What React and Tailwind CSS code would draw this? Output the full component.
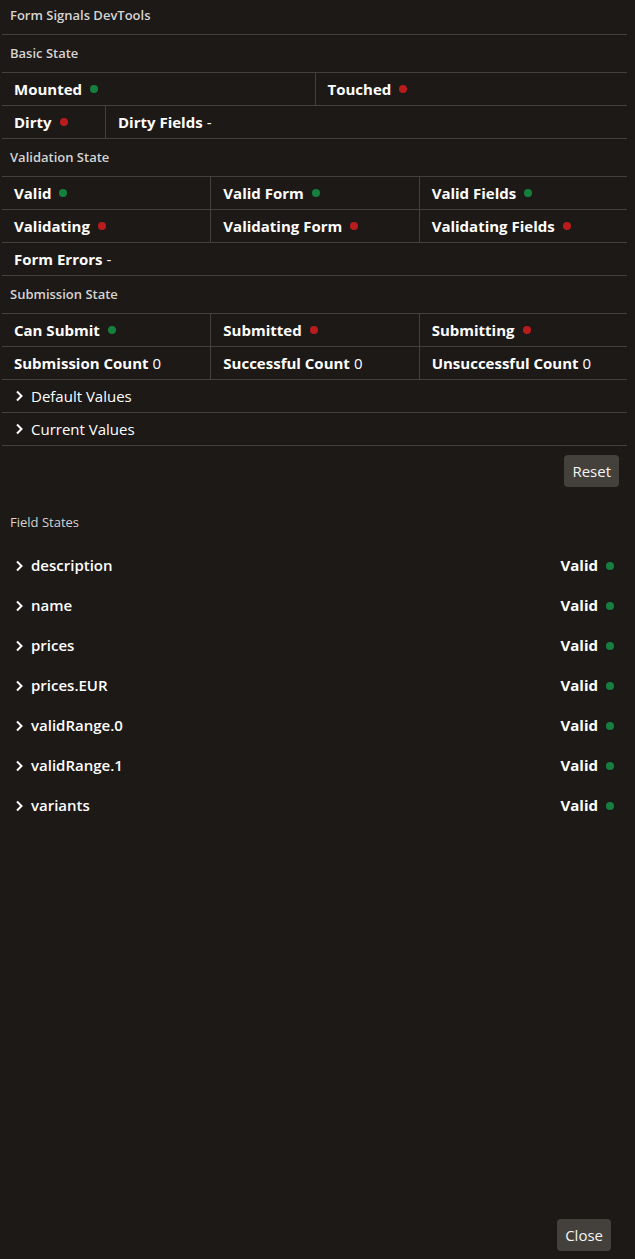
import React from 'react'

const FONT = { fontFamily: '"Open Sans", "Noto Sans", sans-serif' }

// status dot — green when true, red when false
function Dot({ on }) {
  return (
    <span className={`inline-block w-2 h-2 rounded-full ml-2 ${on ? 'bg-[#15803d]' : 'bg-[#b91c1c]'}`} />
  )
}

function Chevron() {
  return (
    <svg width="8" height="12" viewBox="0 0 8 12" fill="none" stroke="currentColor" strokeWidth="2" className="shrink-0">
      <path d="M2 1.5 6.5 6 2 10.5" />
    </svg>
  )
}

function Cell({ label, on, value, className = '' }) {
  return (
    <div className={`flex items-center px-3 text-[15px] text-white ${className}`}>
      <span className="font-bold">{label}</span>
      {on !== undefined && <Dot on={on} />}
      {value !== undefined && <span className="ml-1">{value}</span>}
    </div>
  )
}

function Heading({ children }) {
  return (
    <div className="h-[38px] flex items-center px-2 border-b border-[#44403c] text-[13px] font-semibold text-[#d6d3d1]">
      {children}
    </div>
  )
}

const row = 'h-[33px] border-b border-[#44403c]'

const fields = ['description', 'name', 'prices', 'prices.EUR', 'validRange.0', 'validRange.1', 'variants']

export default function App() {
  return (
    <div className="min-h-screen bg-[#1c1917] flex flex-col" style={FONT}>
      <div className="pl-[2px] pr-[8px]">
        <div className="h-[35px] flex items-center pb-[3px] px-2 border-b border-[#44403c] text-[13px] font-semibold text-[#d6d3d1]">
          Form Signals DevTools
        </div>

        {/* ── Basic State ── */}
        <Heading>Basic State</Heading>
        <div className={`grid grid-cols-2 ${row}`}>
          <Cell label="Mounted" on />
          <Cell label="Touched" on={false} className="border-l border-[#44403c]" />
        </div>
        <div className={`flex ${row}`}>
          <Cell label="Dirty" on={false} className="w-[103px]" />
          <Cell label="Dirty Fields" value="-" className="flex-1 border-l border-[#44403c]" />
        </div>

        {/* ── Validation State ── */}
        <Heading>Validation State</Heading>
        <div className={`grid grid-cols-3 ${row}`}>
          <Cell label="Valid" on />
          <Cell label="Valid Form" on className="border-l border-[#44403c]" />
          <Cell label="Valid Fields" on className="border-l border-[#44403c]" />
        </div>
        <div className={`grid grid-cols-3 ${row}`}>
          <Cell label="Validating" on={false} />
          <Cell label="Validating Form" on={false} className="border-l border-[#44403c]" />
          <Cell label="Validating Fields" on={false} className="border-l border-[#44403c]" />
        </div>
        <div className={`flex ${row}`}>
          <Cell label="Form Errors" value="-" />
        </div>

        {/* ── Submission State ── */}
        <Heading>Submission State</Heading>
        <div className={`grid grid-cols-3 ${row}`}>
          <Cell label="Can Submit" on />
          <Cell label="Submitted" on={false} className="border-l border-[#44403c]" />
          <Cell label="Submitting" on={false} className="border-l border-[#44403c]" />
        </div>
        <div className={`grid grid-cols-3 ${row}`}>
          <Cell label="Submission Count" value="0" />
          <Cell label="Successful Count" value="0" className="border-l border-[#44403c]" />
          <Cell label="Unsuccessful Count" value="0" className="border-l border-[#44403c]" />
        </div>

        {['Default Values', 'Current Values'].map(t => (
          <div key={t} className={`flex items-center gap-[8px] pl-[13px] text-[15px] text-white ${row}`}>
            <Chevron />
            <span>{t}</span>
          </div>
        ))}

        <div className="flex justify-end mt-[9px] pr-2">
          <button className="h-8 px-2 rounded bg-[#44403c] text-[15px] text-[#f5f5f4]">Reset</button>
        </div>

        {/* ── Field States ── */}
        <div className="mt-[26px] px-2 text-[13px] text-[#d6d3d1]">Field States</div>
        <div className="mt-[13px] flex flex-col">
          {fields.map(f => (
            <div key={f} className="h-10 flex items-center pl-[13px] pr-[13px] text-[15px] text-white">
              <Chevron />
              <span className="ml-[8px] font-semibold">{f}</span>
              <span className="ml-auto font-bold">Valid</span>
              <Dot on />
            </div>
          ))}
        </div>
      </div>

      <div className="mt-auto flex justify-end pr-6 pb-2">
        <button className="h-8 px-2 rounded bg-[#44403c] text-[15px] text-[#f5f5f4]">Close</button>
      </div>
    </div>
  )
}
